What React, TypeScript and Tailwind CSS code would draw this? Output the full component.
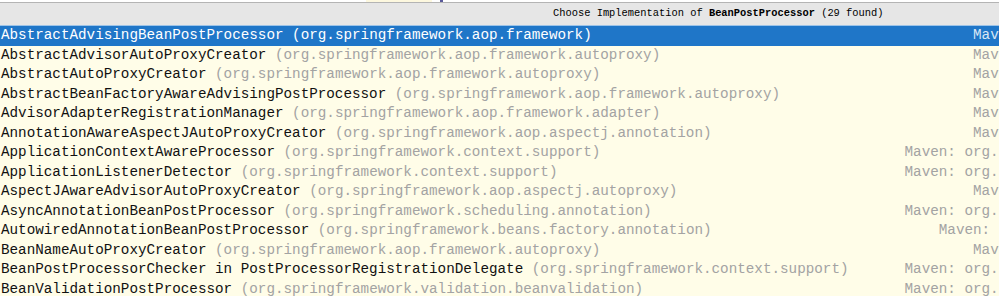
const mono = { fontFamily: '"Liberation Mono", "Courier New", monospace' };

const jar = (a: string) =>
  `Maven: org.springframework:spring-${a}:5.0.8.RELEASE (spring-${a}-5.0.8.RELEASE.jar)`;

const rows = [
  ["AbstractAdvisingBeanPostProcessor", "(org.springframework.aop.framework)", "aop"],
  ["AbstractAdvisorAutoProxyCreator", "(org.springframework.aop.framework.autoproxy)", "aop"],
  ["AbstractAutoProxyCreator", "(org.springframework.aop.framework.autoproxy)", "aop"],
  ["AbstractBeanFactoryAwareAdvisingPostProcessor", "(org.springframework.aop.framework.autoproxy)", "aop"],
  ["AdvisorAdapterRegistrationManager", "(org.springframework.aop.framework.adapter)", "aop"],
  ["AnnotationAwareAspectJAutoProxyCreator", "(org.springframework.aop.aspectj.annotation)", "aop"],
  ["ApplicationContextAwareProcessor", "(org.springframework.context.support)", "context"],
  ["ApplicationListenerDetector", "(org.springframework.context.support)", "context"],
  ["AspectJAwareAdvisorAutoProxyCreator", "(org.springframework.aop.aspectj.autoproxy)", "aop"],
  ["AsyncAnnotationBeanPostProcessor", "(org.springframework.scheduling.annotation)", "context"],
  ["AutowiredAnnotationBeanPostProcessor", "(org.springframework.beans.factory.annotation)", "beans"],
  ["BeanNameAutoProxyCreator", "(org.springframework.aop.framework.autoproxy)", "aop"],
  ["BeanPostProcessorChecker in PostProcessorRegistrationDelegate", "(org.springframework.context.support)", "context"],
  ["BeanValidationPostProcessor", "(org.springframework.validation.beanvalidation)", "context"],
];

export default function App() {
  return (
    <div className="w-[999px] h-[296px] overflow-hidden bg-[#fffde8]" style={mono}>
      {/* editor behind the popup */}
      <div className="flex h-[2px] bg-white">
        <div className="w-[366px]" />
        <div className="w-[66px] bg-[#fdf8df]" />
        <div className="w-[8px]" />
        <div className="w-[3px] bg-[#5a5a9a]" />
      </div>
      <div className="h-[1px] bg-[#b4b4b4]" />

      {/* header */}
      <div className="flex items-center h-[22px] bg-[#e6e6e6] pl-[553px] text-[10.4px] text-black whitespace-nowrap">
        Choose Implementation of&nbsp;<b>BeanPostProcessor</b>&nbsp;(29 found)
      </div>
      <div className="h-[1px] bg-[#9cc3e8]" />

      {/* list */}
      <div className="w-[1675px] flex flex-col text-[14.27px] whitespace-nowrap">
        {rows.map(([name, pkg, art], i) => {
          const sel = i === 0;
          return (
            <div
              key={name}
              className={`flex items-center justify-between h-[19.5px] pl-[1px] ${
                sel ? "bg-[#1f76c8] text-white" : "text-[#111]"
              }`}
            >
              <span>
                {name}{" "}
                <span className={sel ? "text-white" : "text-[#a3a3a3]"}>{pkg}</span>
              </span>
              <span className={sel ? "text-[#d8e6f4]" : "text-[#a3a3a3]"}>{jar(art)}</span>
            </div>
          );
        })}
      </div>
    </div>
  );
}
